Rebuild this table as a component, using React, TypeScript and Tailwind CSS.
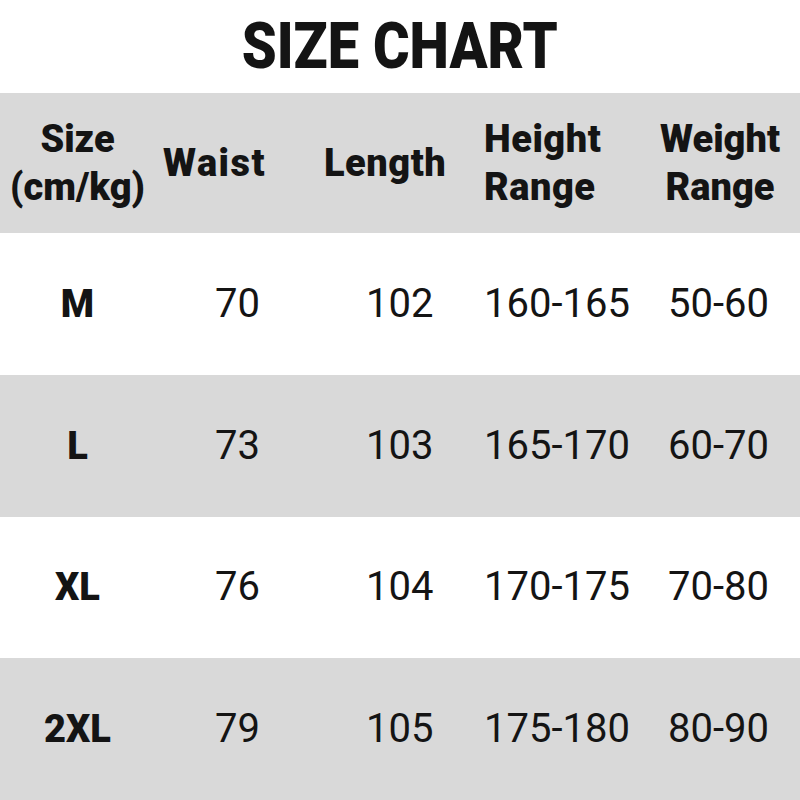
const rows = [
  { size: "M", waist: "70", length: "102", height: "160-165", weight: "50-60" },
  { size: "L", waist: "73", length: "103", height: "165-170", weight: "60-70" },
  { size: "XL", waist: "76", length: "104", height: "170-175", weight: "70-80" },
  { size: "2XL", waist: "79", length: "105", height: "175-180", weight: "80-90" },
]

const cols = "grid grid-cols-[155px_165px_150px_170px_160px]"

export default function App() {
  return (
    <div
      className="w-[800px] h-[800px] bg-white text-[#141414] overflow-hidden"
      style={{ fontFamily: "Roboto, 'Liberation Sans', sans-serif" }}
    >
      <div className="h-[93px] flex items-center justify-center">
        <h1 className="inline-block scale-x-[0.86] text-[65px] font-black leading-none">
          SIZE CHART
        </h1>
      </div>

      <div className={`${cols} h-[140px] items-center bg-[#d9d9d9] text-[38px] font-black leading-[48px]`}>
        <div className="text-center">
          Size
          <br />
          (cm/kg)
        </div>
        <div className="pl-[8px] tracking-[1.5px]">Waist</div>
        <div className="pl-[4px] tracking-[0.5px]">Length</div>
        <div className="pl-[14px] tracking-[0.5px]">
          Height
          <br />
          Range
        </div>
        <div className="text-center">
          Weight
          <br />
          Range
        </div>
      </div>

      {rows.map((r, i) => (
        <div
          key={r.size}
          className={`${cols} h-[141.75px] items-center text-[40px] leading-none ${
            i % 2 === 1 ? "bg-[#d9d9d9]" : "bg-white"
          }`}
        >
          <div className="text-center text-[38px] font-black">{r.size}</div>
          <div className="pl-[60px]">{r.waist}</div>
          <div className="pl-[46px]">{r.length}</div>
          <div className="pl-[14px]">{r.height}</div>
          <div className="pl-[28px]">{r.weight}</div>
        </div>
      ))}
    </div>
  )
}
